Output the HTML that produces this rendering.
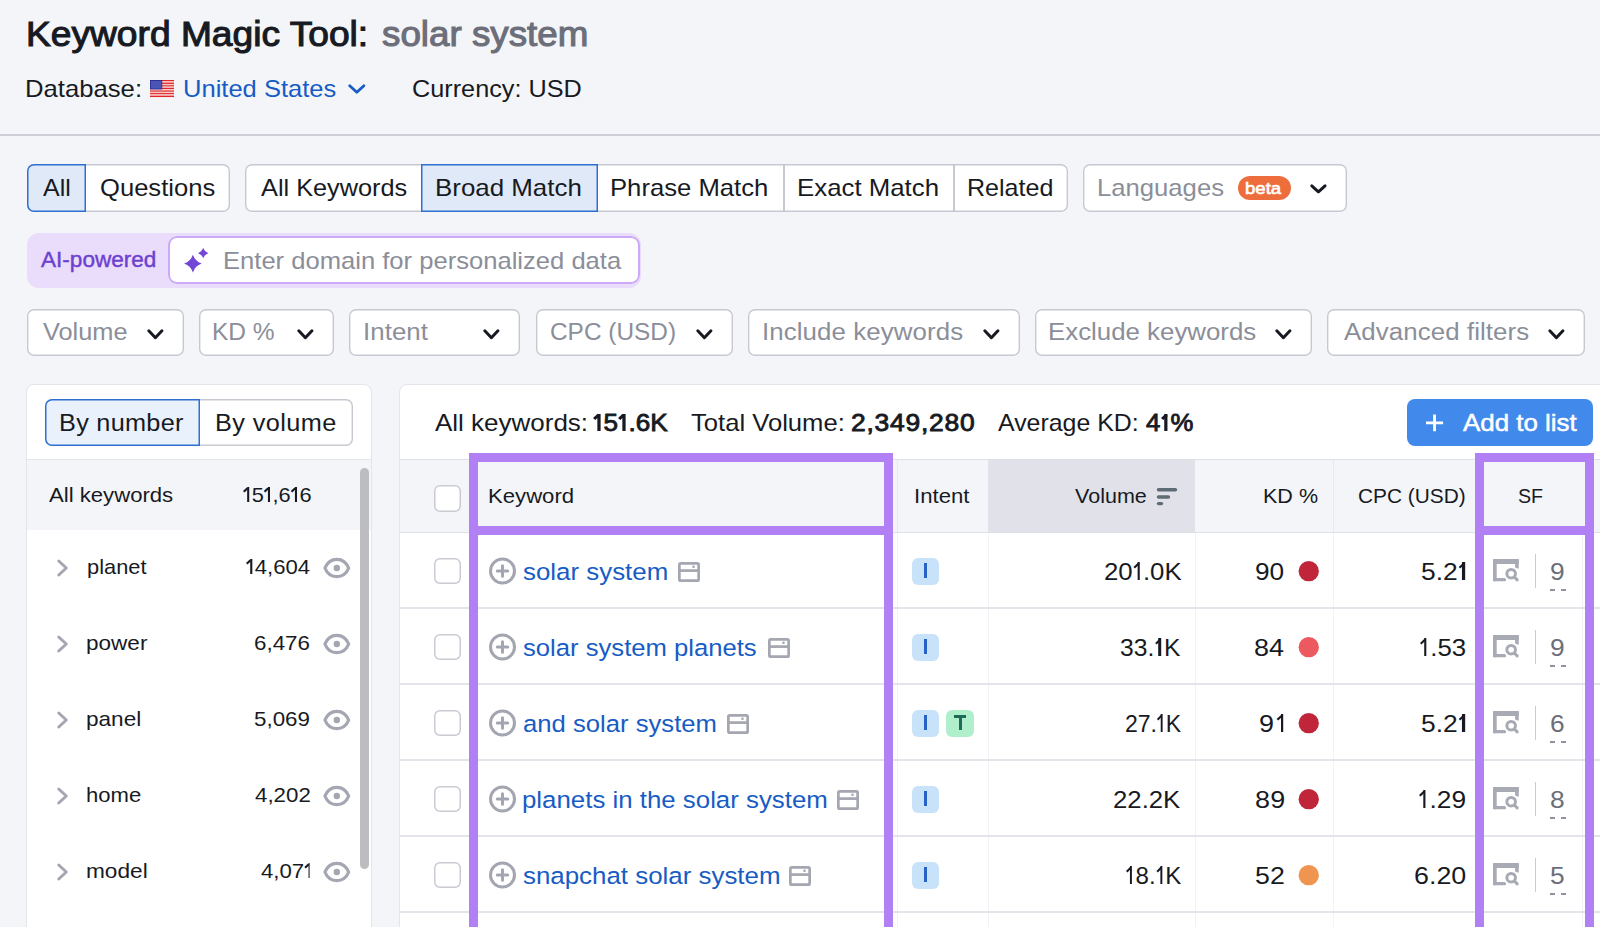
<!DOCTYPE html>
<html><head><meta charset="utf-8"><style>
html,body{margin:0;padding:0;}
body{width:1600px;height:927px;overflow:hidden;background:#f4f5f9;position:relative;font-family:"Liberation Sans",sans-serif;}
.t{position:absolute;white-space:pre;line-height:normal;font-family:"Liberation Sans",sans-serif;z-index:5}
.a{position:absolute;box-sizing:border-box}
svg{position:absolute;overflow:visible}
.one{display:inline-block;position:relative;width:.40em;height:.716em;vertical-align:baseline}.one::before{content:'';position:absolute;left:.175em;top:0;width:.09em;height:.716em;background:currentColor}.one::after{content:'';position:absolute;left:.02em;top:.19em;width:.25em;height:.085em;background:currentColor;transform-origin:0 0;transform:rotate(-45deg)}.one.b::before{width:.125em;left:.16em}.one.b::after{height:.115em}
</style></head><body>
<div class="a" style="left:0px;top:134px;width:1600px;height:2px;background:#cdcfd6"></div>
<svg style="left:150px;top:80px" width="24" height="17" viewBox="150 80 24 17"><rect x="150" y="80.000" width="24" height="1.358" fill="#e0262a"/><rect x="150" y="81.308" width="24" height="1.358" fill="#f7c9c4"/><rect x="150" y="82.615" width="24" height="1.358" fill="#e0262a"/><rect x="150" y="83.923" width="24" height="1.358" fill="#f7c9c4"/><rect x="150" y="85.231" width="24" height="1.358" fill="#e0262a"/><rect x="150" y="86.538" width="24" height="1.358" fill="#f7c9c4"/><rect x="150" y="87.846" width="24" height="1.358" fill="#e0262a"/><rect x="150" y="89.154" width="24" height="1.358" fill="#f7c9c4"/><rect x="150" y="90.462" width="24" height="1.358" fill="#e0262a"/><rect x="150" y="91.769" width="24" height="1.358" fill="#f7c9c4"/><rect x="150" y="93.077" width="24" height="1.358" fill="#e0262a"/><rect x="150" y="94.385" width="24" height="1.358" fill="#f7c9c4"/><rect x="150" y="95.692" width="24" height="1.358" fill="#e0262a"/><rect x="150.4" y="80.4" width="11.4" height="8.6" fill="#4b55b3" stroke="#1f2a9c" stroke-width="0.8"/></svg>
<svg style="left:346px;top:82px" width="21.600000000000023" height="14" viewBox="346 82 21.600000000000023 14"><path d="M349.7,85.7 L356.8,92.3 L363.90000000000003,85.7" fill="none" stroke="#175cc4" stroke-width="2.8" stroke-linecap="round" stroke-linejoin="round"/></svg>
<div class="a" style="left:27px;top:164px;width:202.5px;height:47.5px;background:#fff;box-shadow:inset 0 0 0 1.4px #c6c9d0;border-radius:7px"></div>
<div class="a" style="left:27px;top:164px;width:59px;height:47.5px;background:#e0e9f8;box-shadow:inset 0 0 0 1.5px #2f6fd0;border-radius:7px 0 0 7px"></div>
<div class="a" style="left:244.5px;top:164px;width:823.5px;height:47.5px;background:#fff;box-shadow:inset 0 0 0 1.4px #c6c9d0;border-radius:7px"></div>
<div class="a" style="left:783px;top:164px;width:1.5px;height:47.5px;background:#c6c9d0"></div>
<div class="a" style="left:953px;top:164px;width:1.5px;height:47.5px;background:#c6c9d0"></div>
<div class="a" style="left:421px;top:164px;width:176.5px;height:47.5px;background:#e0e9f8;box-shadow:inset 0 0 0 1.5px #2f6fd0"></div>
<div class="a" style="left:1083px;top:164px;width:264px;height:47.5px;background:#fff;box-shadow:inset 0 0 0 1.4px #c6c9d0;border-radius:7px"></div>
<div class="a" style="left:1238px;top:175.5px;width:52.5px;height:24.2px;background:#ee6d3d;border-radius:12px"></div>
<svg style="left:1307.75px;top:182.4px" width="20.84999999999991" height="13.599999999999994" viewBox="1307.75 182.4 20.84999999999991 13.599999999999994"><path d="M1311.55,186.20000000000002 L1318.175,192.2 L1324.8,186.20000000000002" fill="none" stroke="#171a22" stroke-width="3" stroke-linecap="round" stroke-linejoin="round"/></svg>
<div class="a" style="left:26.75px;top:232.5px;width:614.25px;height:55.2px;background:#eadcfb;border-radius:12px"></div>
<div class="a" style="left:167.75px;top:236.25px;width:471.75px;height:47.25px;background:#fff;box-shadow:inset 0 0 0 2px #cdaaf7;border-radius:9px"></div>
<svg style="left:180px;top:244px" width="32" height="32" viewBox="180 244 32 32"><path d="M192.9,254.8 Q195.18800000000002,261.312 201.70000000000002,263.6 Q195.18800000000002,265.88800000000003 192.9,272.40000000000003 Q190.612,265.88800000000003 184.1,263.6 Q190.612,261.312 192.9,254.8 Z" fill="#7446d6"/><path d="M203.2,248.1 Q204.52599999999998,251.874 208.29999999999998,253.2 Q204.52599999999998,254.52599999999998 203.2,258.3 Q201.874,254.52599999999998 198.1,253.2 Q201.874,251.874 203.2,248.1 Z" fill="#7446d6"/></svg>
<div class="a" style="left:27px;top:309.25px;width:156.75px;height:47px;background:#fff;box-shadow:inset 0 0 0 1.4px #c6c9d0;border-radius:7px"></div>
<svg style="left:145px;top:327px" width="20.75" height="14.5" viewBox="145 327 20.75 14.5"><path d="M148.8,330.8 L155.375,337.7 L161.95,330.8" fill="none" stroke="#171a22" stroke-width="3" stroke-linecap="round" stroke-linejoin="round"/></svg>
<div class="a" style="left:198.75px;top:309.25px;width:135.0px;height:47px;background:#fff;box-shadow:inset 0 0 0 1.4px #c6c9d0;border-radius:7px"></div>
<svg style="left:295px;top:327px" width="20.75" height="14.5" viewBox="295 327 20.75 14.5"><path d="M298.8,330.8 L305.375,337.7 L311.95,330.8" fill="none" stroke="#171a22" stroke-width="3" stroke-linecap="round" stroke-linejoin="round"/></svg>
<div class="a" style="left:348.75px;top:309.25px;width:171.25px;height:47px;background:#fff;box-shadow:inset 0 0 0 1.4px #c6c9d0;border-radius:7px"></div>
<svg style="left:481px;top:327px" width="20.75" height="14.5" viewBox="481 327 20.75 14.5"><path d="M484.8,330.8 L491.375,337.7 L497.95,330.8" fill="none" stroke="#171a22" stroke-width="3" stroke-linecap="round" stroke-linejoin="round"/></svg>
<div class="a" style="left:535.5px;top:309.25px;width:197.0px;height:47px;background:#fff;box-shadow:inset 0 0 0 1.4px #c6c9d0;border-radius:7px"></div>
<svg style="left:693.5px;top:327px" width="20.75" height="14.5" viewBox="693.5 327 20.75 14.5"><path d="M697.3,330.8 L703.875,337.7 L710.45,330.8" fill="none" stroke="#171a22" stroke-width="3" stroke-linecap="round" stroke-linejoin="round"/></svg>
<div class="a" style="left:747.5px;top:309.25px;width:272.0px;height:47px;background:#fff;box-shadow:inset 0 0 0 1.4px #c6c9d0;border-radius:7px"></div>
<svg style="left:981px;top:327px" width="20.75" height="14.5" viewBox="981 327 20.75 14.5"><path d="M984.8,330.8 L991.375,337.7 L997.95,330.8" fill="none" stroke="#171a22" stroke-width="3" stroke-linecap="round" stroke-linejoin="round"/></svg>
<div class="a" style="left:1034.5px;top:309.25px;width:277.5px;height:47px;background:#fff;box-shadow:inset 0 0 0 1.4px #c6c9d0;border-radius:7px"></div>
<svg style="left:1273px;top:327px" width="20.75" height="14.5" viewBox="1273 327 20.75 14.5"><path d="M1276.8,330.8 L1283.375,337.7 L1289.95,330.8" fill="none" stroke="#171a22" stroke-width="3" stroke-linecap="round" stroke-linejoin="round"/></svg>
<div class="a" style="left:1327.4px;top:309.25px;width:258.0999999999999px;height:47px;background:#fff;box-shadow:inset 0 0 0 1.4px #c6c9d0;border-radius:7px"></div>
<svg style="left:1546px;top:327px" width="20.75" height="14.5" viewBox="1546 327 20.75 14.5"><path d="M1549.8,330.8 L1556.375,337.7 L1562.95,330.8" fill="none" stroke="#171a22" stroke-width="3" stroke-linecap="round" stroke-linejoin="round"/></svg>
<div class="a" style="left:26px;top:384px;width:346px;height:700px;background:#fff;border:1px solid #e4e5ea;border-radius:8px"></div>
<div class="a" style="left:45px;top:398.75px;width:307.5px;height:47px;background:#fff;box-shadow:inset 0 0 0 1.4px #c6c9d0;border-radius:7px"></div>
<div class="a" style="left:45px;top:398.75px;width:154.5px;height:47px;background:#e9f1fd;box-shadow:inset 0 0 0 1.5px #2f6fd0;border-radius:7px 0 0 7px"></div>
<div class="a" style="left:27px;top:458.5px;width:344px;height:1px;background:#e4e5ea"></div>
<div class="a" style="left:27px;top:459.5px;width:344px;height:70px;background:#f4f5f9"></div>
<div class="a" style="left:359.5px;top:467.5px;width:9.5px;height:401.5px;background:#bdbdc1;border-radius:5px"></div>
<svg style="left:54px;top:556.5px" width="18" height="22" viewBox="54 556.5 18 22"><path d="M58.75,560.5 L66.25,567.5 L58.75,574.5" fill="none" stroke="#a4a7b1" stroke-width="3" stroke-linecap="round" stroke-linejoin="round"/></svg>
<svg style="left:320px;top:554.5px" width="34" height="26" viewBox="320 554.5 34 26"><path d="M324.9,567.5 C327.6,560.9 331.2,558.8 336.8,558.8 C342.4,558.8 346,560.9 348.7,567.5 C346,574.1 342.4,576.2 336.8,576.2 C331.2,576.2 327.6,574.1 324.9,567.5 Z" fill="none" stroke="#a4a7b1" stroke-width="3.2" stroke-linejoin="round"/><circle cx="336.8" cy="567.5" r="3.2" fill="#a4a7b1"/></svg>
<svg style="left:54px;top:632.5px" width="18" height="22" viewBox="54 632.5 18 22"><path d="M58.75,636.5 L66.25,643.5 L58.75,650.5" fill="none" stroke="#a4a7b1" stroke-width="3" stroke-linecap="round" stroke-linejoin="round"/></svg>
<svg style="left:320px;top:630.5px" width="34" height="26" viewBox="320 630.5 34 26"><path d="M324.9,643.5 C327.6,636.9 331.2,634.8 336.8,634.8 C342.4,634.8 346,636.9 348.7,643.5 C346,650.1 342.4,652.2 336.8,652.2 C331.2,652.2 327.6,650.1 324.9,643.5 Z" fill="none" stroke="#a4a7b1" stroke-width="3.2" stroke-linejoin="round"/><circle cx="336.8" cy="643.5" r="3.2" fill="#a4a7b1"/></svg>
<svg style="left:54px;top:708.5px" width="18" height="22" viewBox="54 708.5 18 22"><path d="M58.75,712.5 L66.25,719.5 L58.75,726.5" fill="none" stroke="#a4a7b1" stroke-width="3" stroke-linecap="round" stroke-linejoin="round"/></svg>
<svg style="left:320px;top:706.5px" width="34" height="26" viewBox="320 706.5 34 26"><path d="M324.9,719.5 C327.6,712.9 331.2,710.8 336.8,710.8 C342.4,710.8 346,712.9 348.7,719.5 C346,726.1 342.4,728.2 336.8,728.2 C331.2,728.2 327.6,726.1 324.9,719.5 Z" fill="none" stroke="#a4a7b1" stroke-width="3.2" stroke-linejoin="round"/><circle cx="336.8" cy="719.5" r="3.2" fill="#a4a7b1"/></svg>
<svg style="left:54px;top:784.5px" width="18" height="22" viewBox="54 784.5 18 22"><path d="M58.75,788.5 L66.25,795.5 L58.75,802.5" fill="none" stroke="#a4a7b1" stroke-width="3" stroke-linecap="round" stroke-linejoin="round"/></svg>
<svg style="left:320px;top:782.5px" width="34" height="26" viewBox="320 782.5 34 26"><path d="M324.9,795.5 C327.6,788.9 331.2,786.8 336.8,786.8 C342.4,786.8 346,788.9 348.7,795.5 C346,802.1 342.4,804.2 336.8,804.2 C331.2,804.2 327.6,802.1 324.9,795.5 Z" fill="none" stroke="#a4a7b1" stroke-width="3.2" stroke-linejoin="round"/><circle cx="336.8" cy="795.5" r="3.2" fill="#a4a7b1"/></svg>
<svg style="left:54px;top:860.5px" width="18" height="22" viewBox="54 860.5 18 22"><path d="M58.75,864.5 L66.25,871.5 L58.75,878.5" fill="none" stroke="#a4a7b1" stroke-width="3" stroke-linecap="round" stroke-linejoin="round"/></svg>
<svg style="left:320px;top:858.5px" width="34" height="26" viewBox="320 858.5 34 26"><path d="M324.9,871.5 C327.6,864.9 331.2,862.8 336.8,862.8 C342.4,862.8 346,864.9 348.7,871.5 C346,878.1 342.4,880.2 336.8,880.2 C331.2,880.2 327.6,878.1 324.9,871.5 Z" fill="none" stroke="#a4a7b1" stroke-width="3.2" stroke-linejoin="round"/><circle cx="336.8" cy="871.5" r="3.2" fill="#a4a7b1"/></svg>
<div class="a" style="left:399px;top:384px;width:1250px;height:700px;background:#fff;border:1px solid #e4e5ea;border-radius:8px"></div>
<div class="a" style="left:1407px;top:398.5px;width:186px;height:47.75px;background:#418aec;border-radius:8px"></div>
<svg style="left:1424px;top:412px" width="22" height="22" viewBox="1424 412 22 22"><path d="M1434.55,414.4 V431.25 M1426,422.8 H1443.1" stroke="#fff" stroke-width="2.8"/></svg>
<div class="a" style="left:400px;top:459px;width:1200px;height:73px;background:#f4f5f9"></div>
<div class="a" style="left:400px;top:458.5px;width:1200px;height:1px;background:#e0e1e8"></div>
<div class="a" style="left:988px;top:459.5px;width:207px;height:72px;background:#e0e1e9"></div>
<div class="a" style="left:400px;top:531.5px;width:1200px;height:1.2px;background:#e0e1e8"></div>
<div class="a" style="left:896.5px;top:459.5px;width:1px;height:72px;background:#e8e9ee"></div>
<div class="a" style="left:1333px;top:459.5px;width:1px;height:72px;background:#e8e9ee"></div>
<div class="a" style="left:897px;top:532.5px;width:1px;height:400px;background:#f1f2f5"></div>
<div class="a" style="left:988px;top:532.5px;width:1px;height:400px;background:#f1f2f5"></div>
<div class="a" style="left:1195px;top:532.5px;width:1px;height:400px;background:#f1f2f5"></div>
<div class="a" style="left:1333px;top:532.5px;width:1px;height:400px;background:#f1f2f5"></div>
<div class="a" style="left:1582px;top:532.5px;width:1px;height:400px;background:#f1f2f5"></div>
<div class="a" style="left:400px;top:607px;width:1200px;height:2px;background:#e4e4eb"></div>
<div class="a" style="left:400px;top:683px;width:1200px;height:2px;background:#e4e4eb"></div>
<div class="a" style="left:400px;top:759px;width:1200px;height:2px;background:#e4e4eb"></div>
<div class="a" style="left:400px;top:835px;width:1200px;height:2px;background:#e4e4eb"></div>
<div class="a" style="left:400px;top:911px;width:1200px;height:2px;background:#e4e4eb"></div>
<svg style="left:1154px;top:486px" width="26" height="22" viewBox="1154 486 26 22"><g stroke="#5e6d75" stroke-width="3.4" stroke-linecap="round"><path d="M1158.5,489.8 H1175.5"/><path d="M1158.5,497 H1168.5"/><path d="M1158.5,503.6 H1161.5"/></g></svg>
<div class="a" style="left:434.25px;top:485px;width:26.5px;height:26.5px;background:#fff;box-shadow:inset 0 0 0 1.5px #c9cbd2;border-radius:6px"></div>
<div class="a" style="left:434.25px;top:557.5px;width:26.5px;height:26.5px;background:#fff;box-shadow:inset 0 0 0 1.5px #c9cbd2;border-radius:6px"></div>
<svg style="left:486px;top:554.7px" width="34" height="32" viewBox="486 554.7 34 32"><circle cx="502.5" cy="570.7" r="12" fill="none" stroke="#a3a6b0" stroke-width="3"/><path d="M502.5,565.5 V575.9000000000001 M497.3,570.7 H507.7" stroke="#a3a6b0" stroke-width="3" stroke-linecap="round"/></svg>
<svg style="left:676px;top:559.7px" width="26" height="24" viewBox="676 559.7 26 24"><rect x="679.35" y="563.0500000000001" width="19.3" height="17.3" rx="1.5" fill="none" stroke="#a4a6b0" stroke-width="2.7"/><path d="M679.5,570.3000000000001 H698.5" stroke="#a4a6b0" stroke-width="2.7"/><circle cx="693.5" cy="566.5" r="1.3" fill="#a4a6b0"/></svg>
<div class="a" style="left:912px;top:557.5px;width:27.2px;height:27.5px;background:#c8e2fa;border-radius:6px"></div>
<div class="a" style="left:924px;top:563.3px;width:3.2px;height:15px;background:#2763c7"></div>
<svg style="left:1296px;top:558.7px" width="26" height="24" viewBox="1296 558.7 26 24"><circle cx="1308.75" cy="570.9" r="10.15" fill="#c1253a"/></svg>
<svg style="left:1492.25px;top:557.8px" width="30" height="26" viewBox="1492.25 557.8 30 26"><rect x="1493.25" y="558.8" width="25.75" height="5" rx="1.3" fill="#a8aab4"/><rect x="1493.25" y="558.8" width="3.7" height="22.3" rx="1.2" fill="#a8aab4"/><rect x="1515.3" y="558.8" width="3.7" height="9.5" fill="#a8aab4"/><rect x="1493.25" y="577.6999999999999" width="13" height="3.4" rx="1" fill="#a8aab4"/><circle cx="1511.4" cy="573.5" r="7.6" fill="#fff"/><circle cx="1511.4" cy="573.5" r="4.3" fill="none" stroke="#a8aab4" stroke-width="3"/><path d="M1514.55,576.8 L1517.45,579.6999999999999" stroke="#a8aab4" stroke-width="3" stroke-linecap="round"/></svg>
<div class="a" style="left:1534.8px;top:554px;width:1.5px;height:34px;background:#cacbd2"></div>
<div class="a" style="left:1550.2px;top:589px;width:5px;height:2px;background:#8f919b"></div>
<div class="a" style="left:1561px;top:589px;width:5px;height:2px;background:#8f919b"></div>
<div class="a" style="left:434.25px;top:633.5px;width:26.5px;height:26.5px;background:#fff;box-shadow:inset 0 0 0 1.5px #c9cbd2;border-radius:6px"></div>
<svg style="left:486px;top:630.7px" width="34" height="32" viewBox="486 630.7 34 32"><circle cx="502.5" cy="646.7" r="12" fill="none" stroke="#a3a6b0" stroke-width="3"/><path d="M502.5,641.5 V651.9000000000001 M497.3,646.7 H507.7" stroke="#a3a6b0" stroke-width="3" stroke-linecap="round"/></svg>
<svg style="left:765.5px;top:635.7px" width="26" height="24" viewBox="765.5 635.7 26 24"><rect x="768.85" y="639.0500000000001" width="19.3" height="17.3" rx="1.5" fill="none" stroke="#a4a6b0" stroke-width="2.7"/><path d="M769.0,646.3000000000001 H788.0" stroke="#a4a6b0" stroke-width="2.7"/><circle cx="783.0" cy="642.5" r="1.3" fill="#a4a6b0"/></svg>
<div class="a" style="left:912px;top:633.5px;width:27.2px;height:27.5px;background:#c8e2fa;border-radius:6px"></div>
<div class="a" style="left:924px;top:639.3px;width:3.2px;height:15px;background:#2763c7"></div>
<svg style="left:1296px;top:634.7px" width="26" height="24" viewBox="1296 634.7 26 24"><circle cx="1308.75" cy="646.9" r="10.15" fill="#ec5a60"/></svg>
<svg style="left:1492.25px;top:633.8px" width="30" height="26" viewBox="1492.25 633.8 30 26"><rect x="1493.25" y="634.8" width="25.75" height="5" rx="1.3" fill="#a8aab4"/><rect x="1493.25" y="634.8" width="3.7" height="22.3" rx="1.2" fill="#a8aab4"/><rect x="1515.3" y="634.8" width="3.7" height="9.5" fill="#a8aab4"/><rect x="1493.25" y="653.6999999999999" width="13" height="3.4" rx="1" fill="#a8aab4"/><circle cx="1511.4" cy="649.5" r="7.6" fill="#fff"/><circle cx="1511.4" cy="649.5" r="4.3" fill="none" stroke="#a8aab4" stroke-width="3"/><path d="M1514.55,652.8 L1517.45,655.6999999999999" stroke="#a8aab4" stroke-width="3" stroke-linecap="round"/></svg>
<div class="a" style="left:1534.8px;top:630px;width:1.5px;height:34px;background:#cacbd2"></div>
<div class="a" style="left:1550.2px;top:665px;width:5px;height:2px;background:#8f919b"></div>
<div class="a" style="left:1561px;top:665px;width:5px;height:2px;background:#8f919b"></div>
<div class="a" style="left:434.25px;top:709.5px;width:26.5px;height:26.5px;background:#fff;box-shadow:inset 0 0 0 1.5px #c9cbd2;border-radius:6px"></div>
<svg style="left:486px;top:706.7px" width="34" height="32" viewBox="486 706.7 34 32"><circle cx="502.5" cy="722.7" r="12" fill="none" stroke="#a3a6b0" stroke-width="3"/><path d="M502.5,717.5 V727.9000000000001 M497.3,722.7 H507.7" stroke="#a3a6b0" stroke-width="3" stroke-linecap="round"/></svg>
<svg style="left:724.8px;top:711.7px" width="26" height="24" viewBox="724.8 711.7 26 24"><rect x="728.15" y="715.0500000000001" width="19.3" height="17.3" rx="1.5" fill="none" stroke="#a4a6b0" stroke-width="2.7"/><path d="M728.3,722.3000000000001 H747.3" stroke="#a4a6b0" stroke-width="2.7"/><circle cx="742.3" cy="718.5" r="1.3" fill="#a4a6b0"/></svg>
<div class="a" style="left:912px;top:709.5px;width:27.2px;height:27.5px;background:#c8e2fa;border-radius:6px"></div>
<div class="a" style="left:924px;top:715.3px;width:3.2px;height:15px;background:#2763c7"></div>
<div class="a" style="left:946px;top:709.5px;width:28px;height:27.5px;background:#b0efcb;border-radius:6px"></div>
<div class="a" style="left:953.9px;top:715.3px;width:12.3px;height:2.9px;background:#1d6b56"></div>
<div class="a" style="left:958.8px;top:715.3px;width:2.9px;height:15px;background:#1d6b56"></div>
<svg style="left:1296px;top:710.7px" width="26" height="24" viewBox="1296 710.7 26 24"><circle cx="1308.75" cy="722.9" r="10.15" fill="#c1253a"/></svg>
<svg style="left:1492.25px;top:709.8px" width="30" height="26" viewBox="1492.25 709.8 30 26"><rect x="1493.25" y="710.8" width="25.75" height="5" rx="1.3" fill="#a8aab4"/><rect x="1493.25" y="710.8" width="3.7" height="22.3" rx="1.2" fill="#a8aab4"/><rect x="1515.3" y="710.8" width="3.7" height="9.5" fill="#a8aab4"/><rect x="1493.25" y="729.6999999999999" width="13" height="3.4" rx="1" fill="#a8aab4"/><circle cx="1511.4" cy="725.5" r="7.6" fill="#fff"/><circle cx="1511.4" cy="725.5" r="4.3" fill="none" stroke="#a8aab4" stroke-width="3"/><path d="M1514.55,728.8 L1517.45,731.6999999999999" stroke="#a8aab4" stroke-width="3" stroke-linecap="round"/></svg>
<div class="a" style="left:1534.8px;top:706px;width:1.5px;height:34px;background:#cacbd2"></div>
<div class="a" style="left:1550.2px;top:741px;width:5px;height:2px;background:#8f919b"></div>
<div class="a" style="left:1561px;top:741px;width:5px;height:2px;background:#8f919b"></div>
<div class="a" style="left:434.25px;top:785.5px;width:26.5px;height:26.5px;background:#fff;box-shadow:inset 0 0 0 1.5px #c9cbd2;border-radius:6px"></div>
<svg style="left:486px;top:782.7px" width="34" height="32" viewBox="486 782.7 34 32"><circle cx="502.5" cy="798.7" r="12" fill="none" stroke="#a3a6b0" stroke-width="3"/><path d="M502.5,793.5 V803.9000000000001 M497.3,798.7 H507.7" stroke="#a3a6b0" stroke-width="3" stroke-linecap="round"/></svg>
<svg style="left:834.8px;top:787.7px" width="26" height="24" viewBox="834.8 787.7 26 24"><rect x="838.15" y="791.0500000000001" width="19.3" height="17.3" rx="1.5" fill="none" stroke="#a4a6b0" stroke-width="2.7"/><path d="M838.3,798.3000000000001 H857.3" stroke="#a4a6b0" stroke-width="2.7"/><circle cx="852.3" cy="794.5" r="1.3" fill="#a4a6b0"/></svg>
<div class="a" style="left:912px;top:785.5px;width:27.2px;height:27.5px;background:#c8e2fa;border-radius:6px"></div>
<div class="a" style="left:924px;top:791.3px;width:3.2px;height:15px;background:#2763c7"></div>
<svg style="left:1296px;top:786.7px" width="26" height="24" viewBox="1296 786.7 26 24"><circle cx="1308.75" cy="798.9" r="10.15" fill="#c1253a"/></svg>
<svg style="left:1492.25px;top:785.8px" width="30" height="26" viewBox="1492.25 785.8 30 26"><rect x="1493.25" y="786.8" width="25.75" height="5" rx="1.3" fill="#a8aab4"/><rect x="1493.25" y="786.8" width="3.7" height="22.3" rx="1.2" fill="#a8aab4"/><rect x="1515.3" y="786.8" width="3.7" height="9.5" fill="#a8aab4"/><rect x="1493.25" y="805.6999999999999" width="13" height="3.4" rx="1" fill="#a8aab4"/><circle cx="1511.4" cy="801.5" r="7.6" fill="#fff"/><circle cx="1511.4" cy="801.5" r="4.3" fill="none" stroke="#a8aab4" stroke-width="3"/><path d="M1514.55,804.8 L1517.45,807.6999999999999" stroke="#a8aab4" stroke-width="3" stroke-linecap="round"/></svg>
<div class="a" style="left:1534.8px;top:782px;width:1.5px;height:34px;background:#cacbd2"></div>
<div class="a" style="left:1550.2px;top:817px;width:5px;height:2px;background:#8f919b"></div>
<div class="a" style="left:1561px;top:817px;width:5px;height:2px;background:#8f919b"></div>
<div class="a" style="left:434.25px;top:861.5px;width:26.5px;height:26.5px;background:#fff;box-shadow:inset 0 0 0 1.5px #c9cbd2;border-radius:6px"></div>
<svg style="left:486px;top:858.7px" width="34" height="32" viewBox="486 858.7 34 32"><circle cx="502.5" cy="874.7" r="12" fill="none" stroke="#a3a6b0" stroke-width="3"/><path d="M502.5,869.5 V879.9000000000001 M497.3,874.7 H507.7" stroke="#a3a6b0" stroke-width="3" stroke-linecap="round"/></svg>
<svg style="left:786.9px;top:863.7px" width="26" height="24" viewBox="786.9 863.7 26 24"><rect x="790.25" y="867.0500000000001" width="19.3" height="17.3" rx="1.5" fill="none" stroke="#a4a6b0" stroke-width="2.7"/><path d="M790.4,874.3000000000001 H809.4" stroke="#a4a6b0" stroke-width="2.7"/><circle cx="804.4" cy="870.5" r="1.3" fill="#a4a6b0"/></svg>
<div class="a" style="left:912px;top:861.5px;width:27.2px;height:27.5px;background:#c8e2fa;border-radius:6px"></div>
<div class="a" style="left:924px;top:867.3px;width:3.2px;height:15px;background:#2763c7"></div>
<svg style="left:1296px;top:862.7px" width="26" height="24" viewBox="1296 862.7 26 24"><circle cx="1308.75" cy="874.9" r="10.15" fill="#f0954f"/></svg>
<svg style="left:1492.25px;top:861.8px" width="30" height="26" viewBox="1492.25 861.8 30 26"><rect x="1493.25" y="862.8" width="25.75" height="5" rx="1.3" fill="#a8aab4"/><rect x="1493.25" y="862.8" width="3.7" height="22.3" rx="1.2" fill="#a8aab4"/><rect x="1515.3" y="862.8" width="3.7" height="9.5" fill="#a8aab4"/><rect x="1493.25" y="881.6999999999999" width="13" height="3.4" rx="1" fill="#a8aab4"/><circle cx="1511.4" cy="877.5" r="7.6" fill="#fff"/><circle cx="1511.4" cy="877.5" r="4.3" fill="none" stroke="#a8aab4" stroke-width="3"/><path d="M1514.55,880.8 L1517.45,883.6999999999999" stroke="#a8aab4" stroke-width="3" stroke-linecap="round"/></svg>
<div class="a" style="left:1534.8px;top:858px;width:1.5px;height:34px;background:#cacbd2"></div>
<div class="a" style="left:1550.2px;top:893px;width:5px;height:2px;background:#8f919b"></div>
<div class="a" style="left:1561px;top:893px;width:5px;height:2px;background:#8f919b"></div>
<div class="a" style="left:469px;top:453px;width:424px;height:82px;border:9px solid #b180f4"></div>
<div class="a" style="left:469px;top:526px;width:424px;height:500px;border:9px solid #b180f4"></div>
<div class="a" style="left:1475px;top:453px;width:119px;height:82px;border:9px solid #b180f4"></div>
<div class="a" style="left:1475px;top:526px;width:119px;height:500px;border:9px solid #b180f4"></div>
<span class="t" style="left:25.61px;top:14.00px;font-size:35.5px;font-weight:400;color:#171a22;letter-spacing:0.000px;transform:scaleX(1.0466);transform-origin:0 0;-webkit-text-stroke:1.1px currentColor">Keyword Magic Tool:</span><span class="t" style="left:381.60px;top:14.00px;font-size:35.5px;font-weight:400;color:#6c6e79;letter-spacing:0.000px;transform:scaleX(1.0354);transform-origin:0 0;-webkit-text-stroke:1.1px currentColor">solar system</span><span class="t" style="left:25.36px;top:75.00px;font-size:24px;font-weight:400;color:#171a22;letter-spacing:0.000px;transform:scaleX(1.0695);transform-origin:0 0;">Database:</span><span class="t" style="left:182.57px;top:75.00px;font-size:24px;font-weight:400;color:#175cc4;letter-spacing:0.000px;transform:scaleX(1.0638);transform-origin:0 0;">United States</span><span class="t" style="left:412.45px;top:75.00px;font-size:24px;font-weight:400;color:#171a22;letter-spacing:0.000px;transform:scaleX(1.0522);transform-origin:0 0;">Currency: USD</span><span class="t" style="left:43.00px;top:174.40px;font-size:24px;font-weight:400;color:#171a22;letter-spacing:0.000px;transform:scaleX(1.0400);transform-origin:0 0;">All</span><span class="t" style="left:99.53px;top:174.40px;font-size:24px;font-weight:400;color:#171a22;letter-spacing:-0.000px;transform:scaleX(1.0660);transform-origin:0 0;">Questions</span><span class="t" style="left:260.50px;top:174.40px;font-size:24px;font-weight:400;color:#171a22;letter-spacing:0.000px;transform:scaleX(1.0543);transform-origin:0 0;">All Keywords</span><span class="t" style="left:435.34px;top:174.40px;font-size:24px;font-weight:400;color:#171a22;letter-spacing:0.000px;transform:scaleX(1.0789);transform-origin:0 0;">Broad Match</span><span class="t" style="left:610.36px;top:174.40px;font-size:24px;font-weight:400;color:#171a22;letter-spacing:0.000px;transform:scaleX(1.0690);transform-origin:0 0;">Phrase Match</span><span class="t" style="left:796.60px;top:174.40px;font-size:24px;font-weight:400;color:#171a22;letter-spacing:0.000px;transform:scaleX(1.0756);transform-origin:0 0;">Exact Match</span><span class="t" style="left:967.41px;top:174.40px;font-size:24px;font-weight:400;color:#171a22;letter-spacing:0.000px;transform:scaleX(1.0443);transform-origin:0 0;">Related</span><span class="t" style="left:1096.86px;top:174.40px;font-size:24px;font-weight:400;color:#8b8e99;letter-spacing:0.000px;transform:scaleX(1.0690);transform-origin:0 0;">Languages</span><span class="t" style="left:1244.71px;top:178.70px;font-size:17px;font-weight:400;color:#ffffff;letter-spacing:0.000px;transform:scaleX(1.0939);transform-origin:0 0;-webkit-text-stroke:0.6px currentColor">beta</span><span class="t" style="left:41.30px;top:248.40px;font-size:21.5px;font-weight:400;color:#6c41d0;letter-spacing:0.000px;transform:scaleX(1.0495);transform-origin:0 0;-webkit-text-stroke:0.4px currentColor">AI-powered</span><span class="t" style="left:223.37px;top:247.00px;font-size:24px;font-weight:400;color:#8b8e99;letter-spacing:0.000px;transform:scaleX(1.0659);transform-origin:0 0;">Enter domain for personalized data</span><span class="t" style="left:43.00px;top:319.00px;font-size:23.5px;font-weight:400;color:#8b8e99;letter-spacing:0.000px;transform:scaleX(1.0779);transform-origin:0 0;">Volume</span><span class="t" style="left:212.41px;top:319.00px;font-size:23.5px;font-weight:400;color:#8b8e99;letter-spacing:0.000px;transform:scaleX(1.0431);transform-origin:0 0;">KD %</span><span class="t" style="left:362.80px;top:319.00px;font-size:23.5px;font-weight:400;color:#8b8e99;letter-spacing:0.055px;transform:scaleX(1.1000);transform-origin:0 0;">Intent</span><span class="t" style="left:549.96px;top:319.00px;font-size:23.5px;font-weight:400;color:#8b8e99;letter-spacing:-0.000px;transform:scaleX(1.0378);transform-origin:0 0;">CPC (USD)</span><span class="t" style="left:761.55px;top:319.00px;font-size:23.5px;font-weight:400;color:#8b8e99;letter-spacing:0.082px;transform:scaleX(1.1000);transform-origin:0 0;">Include keywords</span><span class="t" style="left:1047.80px;top:319.00px;font-size:23.5px;font-weight:400;color:#8b8e99;letter-spacing:0.000px;transform:scaleX(1.0995);transform-origin:0 0;">Exclude keywords</span><span class="t" style="left:1343.70px;top:319.00px;font-size:23.5px;font-weight:400;color:#8b8e99;letter-spacing:0.073px;transform:scaleX(1.1000);transform-origin:0 0;">Advanced filters</span><span class="t" style="left:59.05px;top:409.75px;font-size:23px;font-weight:400;color:#171a22;letter-spacing:0.239px;transform:scaleX(1.1000);transform-origin:0 0;">By number</span><span class="t" style="left:214.80px;top:409.75px;font-size:23px;font-weight:400;color:#171a22;letter-spacing:0.352px;transform:scaleX(1.1000);transform-origin:0 0;">By volume</span><span class="t" style="left:49.25px;top:482.75px;font-size:21px;font-weight:400;color:#171a22;letter-spacing:0.000px;transform:scaleX(1.0534);transform-origin:0 0;">All keywords</span><span class="t" style="left:242.50px;top:482.75px;font-size:21px;font-weight:400;color:#171a22;letter-spacing:0.000px;transform:scaleX(1.0385);transform-origin:0 0;"><span class="one" style="margin-right:0.000px"></span>5<span class="one" style="margin-right:0.000px"></span>,6<span class="one" style="margin-right:0.000px"></span>6</span><span class="t" style="left:86.66px;top:555.00px;font-size:21px;font-weight:400;color:#171a22;letter-spacing:0.000px;transform:scaleX(1.0393);transform-origin:0 0;">planet</span><span class="t" style="left:245.60px;top:555.00px;font-size:21px;font-weight:400;color:#171a22;letter-spacing:0.000px;transform:scaleX(1.0525);transform-origin:0 0;"><span class="one" style="margin-right:0.000px"></span>4,604</span><span class="t" style="left:85.83px;top:631.00px;font-size:21px;font-weight:400;color:#171a22;letter-spacing:0.000px;transform:scaleX(1.0732);transform-origin:0 0;">power</span><span class="t" style="left:254.44px;top:631.00px;font-size:21px;font-weight:400;color:#171a22;letter-spacing:0.000px;transform:scaleX(1.0647);transform-origin:0 0;">6,476</span><span class="t" style="left:85.82px;top:707.00px;font-size:21px;font-weight:400;color:#171a22;letter-spacing:0.000px;transform:scaleX(1.0755);transform-origin:0 0;">panel</span><span class="t" style="left:254.44px;top:707.00px;font-size:21px;font-weight:400;color:#171a22;letter-spacing:0.000px;transform:scaleX(1.0647);transform-origin:0 0;">5,069</span><span class="t" style="left:85.85px;top:783.00px;font-size:21px;font-weight:400;color:#171a22;letter-spacing:0.000px;transform:scaleX(1.0510);transform-origin:0 0;">home</span><span class="t" style="left:254.60px;top:783.00px;font-size:21px;font-weight:400;color:#171a22;letter-spacing:0.000px;transform:scaleX(1.0615);transform-origin:0 0;">4,202</span><span class="t" style="left:85.82px;top:859.00px;font-size:21px;font-weight:400;color:#171a22;letter-spacing:0.000px;transform:scaleX(1.0782);transform-origin:0 0;">model</span><span class="t" style="left:261.20px;top:859.00px;font-size:21px;font-weight:400;color:#171a22;letter-spacing:0.000px;transform:scaleX(1.0565);transform-origin:0 0;">4,07<span class="one" style="margin-right:0.000px"></span></span><span class="t" style="left:434.50px;top:408.75px;font-size:24px;font-weight:400;color:#171a22;letter-spacing:0.000px;transform:scaleX(1.0827);transform-origin:0 0;">All keywords:</span><span class="t" style="left:593.00px;top:408.75px;font-size:24px;font-weight:400;color:#171a22;letter-spacing:0.000px;transform:scaleX(1.0870);transform-origin:0 0;-webkit-text-stroke:0.85px currentColor"><span class="one b" style="margin-right:0.000px"></span>5<span class="one b" style="margin-right:0.000px"></span>.6K</span><span class="t" style="left:691.40px;top:408.75px;font-size:24px;font-weight:400;color:#171a22;letter-spacing:0.000px;transform:scaleX(1.0676);transform-origin:0 0;">Total Volume:</span><span class="t" style="left:851.20px;top:408.75px;font-size:24px;font-weight:400;color:#171a22;letter-spacing:0.705px;transform:scaleX(1.1000);transform-origin:0 0;-webkit-text-stroke:0.85px currentColor">2,349,280</span><span class="t" style="left:998.00px;top:408.75px;font-size:24px;font-weight:400;color:#171a22;letter-spacing:0.000px;transform:scaleX(1.0373);transform-origin:0 0;">Average KD:</span><span class="t" style="left:1146.40px;top:408.75px;font-size:24px;font-weight:400;color:#171a22;letter-spacing:0.000px;transform:scaleX(1.0727);transform-origin:0 0;-webkit-text-stroke:0.85px currentColor">4<span class="one b" style="margin-right:0.000px"></span>%</span><span class="t" style="left:1463.10px;top:408.60px;font-size:24.5px;font-weight:400;color:#ffffff;letter-spacing:0.000px;transform:scaleX(1.0569);transform-origin:0 0;-webkit-text-stroke:0.5px currentColor">Add to list</span><span class="t" style="left:487.89px;top:484.30px;font-size:21px;font-weight:400;color:#171a22;letter-spacing:0.000px;transform:scaleX(1.0538);transform-origin:0 0;">Keyword</span><span class="t" style="left:913.89px;top:484.30px;font-size:21px;font-weight:400;color:#171a22;letter-spacing:0.000px;transform:scaleX(1.0549);transform-origin:0 0;">Intent</span><span class="t" style="left:1074.60px;top:484.30px;font-size:21px;font-weight:400;color:#171a22;letter-spacing:0.000px;transform:scaleX(1.0246);transform-origin:0 0;">Volume</span><span class="t" style="left:1262.65px;top:484.30px;font-size:21px;font-weight:400;color:#171a22;letter-spacing:0.000px;transform:scaleX(1.0255);transform-origin:0 0;">KD %</span><span class="t" style="left:1357.81px;top:484.30px;font-size:21px;font-weight:400;color:#171a22;letter-spacing:0.000px;transform:scaleX(0.9925);transform-origin:0 0;">CPC (USD)</span><span class="t" style="left:1517.79px;top:485.30px;font-size:19.5px;font-weight:400;color:#171a22;letter-spacing:0.000px;transform:scaleX(1.0087);transform-origin:0 0;">SF</span><span class="t" style="left:523.34px;top:558.00px;font-size:24.5px;font-weight:400;color:#175cc4;letter-spacing:0.000px;transform:scaleX(1.0563);transform-origin:0 0;">solar system</span><span class="t" style="left:1103.75px;top:558.00px;font-size:24.5px;font-weight:400;color:#171a22;letter-spacing:0.000px;transform:scaleX(1.0514);transform-origin:0 0;">20<span class="one" style="margin-right:0.000px"></span>.0K</span><span class="t" style="left:1254.53px;top:558.00px;font-size:24.5px;font-weight:400;color:#171a22;letter-spacing:-0.000px;transform:scaleX(1.0692);transform-origin:0 0;">90</span><span class="t" style="left:1420.82px;top:558.00px;font-size:24.5px;font-weight:400;color:#171a22;letter-spacing:0.000px;transform:scaleX(1.0775);transform-origin:0 0;">5.2<span class="one" style="margin-right:0.000px"></span></span><span class="t" style="left:1550.42px;top:558.00px;font-size:24.5px;font-weight:400;color:#6c6e79;letter-spacing:0.000px;transform:scaleX(1.0750);transform-origin:0 0;">9</span><span class="t" style="left:523.35px;top:634.00px;font-size:24.5px;font-weight:400;color:#175cc4;letter-spacing:0.000px;transform:scaleX(1.0464);transform-origin:0 0;">solar system planets</span><span class="t" style="left:1120.19px;top:634.00px;font-size:24.5px;font-weight:400;color:#171a22;letter-spacing:0.000px;transform:scaleX(1.0051);transform-origin:0 0;">33.<span class="one" style="margin-right:0.000px"></span>K</span><span class="t" style="left:1253.70px;top:634.00px;font-size:24.5px;font-weight:400;color:#171a22;letter-spacing:0.000px;transform:scaleX(1.1000);transform-origin:0 0;">84</span><span class="t" style="left:1419.70px;top:634.00px;font-size:24.5px;font-weight:400;color:#171a22;letter-spacing:0.000px;transform:scaleX(1.0535);transform-origin:0 0;"><span class="one" style="margin-right:0.000px"></span>.53</span><span class="t" style="left:1550.42px;top:634.00px;font-size:24.5px;font-weight:400;color:#6c6e79;letter-spacing:0.000px;transform:scaleX(1.0750);transform-origin:0 0;">9</span><span class="t" style="left:523.35px;top:710.00px;font-size:24.5px;font-weight:400;color:#175cc4;letter-spacing:-0.000px;transform:scaleX(1.0470);transform-origin:0 0;">and solar system</span><span class="t" style="left:1124.56px;top:710.00px;font-size:24.5px;font-weight:400;color:#171a22;letter-spacing:-0.122px;transform:scaleX(0.9400);transform-origin:0 0;">27.<span class="one" style="margin-right:-0.122px"></span>K</span><span class="t" style="left:1258.90px;top:710.00px;font-size:24.5px;font-weight:400;color:#171a22;letter-spacing:2.273px;transform:scaleX(1.1000);transform-origin:0 0;">9<span class="one" style="margin-right:2.273px"></span></span><span class="t" style="left:1420.82px;top:710.00px;font-size:24.5px;font-weight:400;color:#171a22;letter-spacing:0.000px;transform:scaleX(1.0775);transform-origin:0 0;">5.2<span class="one" style="margin-right:0.000px"></span></span><span class="t" style="left:1550.42px;top:710.00px;font-size:24.5px;font-weight:400;color:#6c6e79;letter-spacing:0.000px;transform:scaleX(1.0750);transform-origin:0 0;">6</span><span class="t" style="left:522.29px;top:786.00px;font-size:24.5px;font-weight:400;color:#175cc4;letter-spacing:0.000px;transform:scaleX(1.0544);transform-origin:0 0;">planets in the solar system</span><span class="t" style="left:1113.25px;top:786.00px;font-size:24.5px;font-weight:400;color:#171a22;letter-spacing:0.000px;transform:scaleX(1.0508);transform-origin:0 0;">22.2K</span><span class="t" style="left:1254.60px;top:786.00px;font-size:24.5px;font-weight:400;color:#171a22;letter-spacing:0.182px;transform:scaleX(1.1000);transform-origin:0 0;">89</span><span class="t" style="left:1418.80px;top:786.00px;font-size:24.5px;font-weight:400;color:#171a22;letter-spacing:0.000px;transform:scaleX(1.0744);transform-origin:0 0;"><span class="one" style="margin-right:0.000px"></span>.29</span><span class="t" style="left:1550.42px;top:786.00px;font-size:24.5px;font-weight:400;color:#6c6e79;letter-spacing:0.000px;transform:scaleX(1.0750);transform-origin:0 0;">8</span><span class="t" style="left:523.34px;top:862.00px;font-size:24.5px;font-weight:400;color:#175cc4;letter-spacing:0.000px;transform:scaleX(1.0564);transform-origin:0 0;">snapchat solar system</span><span class="t" style="left:1125.50px;top:862.00px;font-size:24.5px;font-weight:400;color:#171a22;letter-spacing:0.000px;transform:scaleX(0.9821);transform-origin:0 0;"><span class="one" style="margin-right:0.000px"></span>8.<span class="one" style="margin-right:0.000px"></span>K</span><span class="t" style="left:1255.01px;top:862.00px;font-size:24.5px;font-weight:400;color:#171a22;letter-spacing:0.000px;transform:scaleX(1.0920);transform-origin:0 0;">52</span><span class="t" style="left:1413.50px;top:862.00px;font-size:24.5px;font-weight:400;color:#171a22;letter-spacing:0.000px;transform:scaleX(1.0957);transform-origin:0 0;">6.20</span><span class="t" style="left:1550.42px;top:862.00px;font-size:24.5px;font-weight:400;color:#6c6e79;letter-spacing:0.000px;transform:scaleX(1.0750);transform-origin:0 0;">5</span>
</body></html>
